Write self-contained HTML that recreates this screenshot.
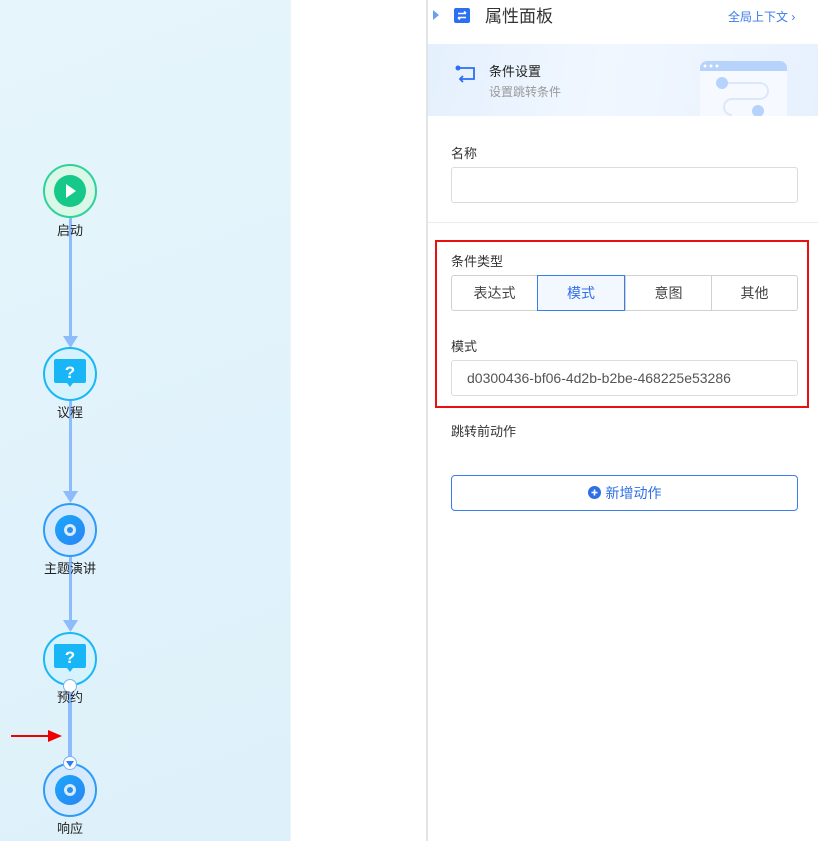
<!DOCTYPE html>
<html><head><meta charset="utf-8"><style>
*{margin:0;padding:0;box-sizing:border-box}
body{width:818px;height:841px;overflow:hidden;position:relative;background:#fff;font-family:"Liberation Sans","Noto Sans CJK SC",sans-serif;font-size:13px;color:#333}
.a{position:absolute}
.lbl{position:absolute;width:120px;left:10px;text-align:center;font-size:13px;color:#222}
.node{position:absolute;left:43px;width:54px;height:54px;border-radius:50%}
.seg{position:absolute;top:275px;height:36px;border:1px solid #d0d0d0;text-align:center;line-height:34px;font-size:14px;color:#444;background:#fff}
.inp{position:absolute;left:451px;width:347px;border:1px solid #dcdcdc;border-radius:3px}
</style></head><body>
<div class="a" style="left:0;top:0;width:290px;height:841px;background:linear-gradient(160deg,#e6f5fb,#e0f2fb 60%,#def1fa)"></div>
<div class="a" style="left:290px;top:0;width:1px;height:841px;background:#eef4f8"></div>
<div class="a" style="left:69px;top:218px;width:3px;height:120px;background:#8cbcfb"></div>
<svg class="a" style="left:63px;top:336px" width="15" height="12"><path d="M0 0H15L7.5 12Z" fill="#8cbcfb"/></svg>
<div class="a" style="left:69px;top:401px;width:3px;height:92px;background:#8cbcfb"></div>
<svg class="a" style="left:63px;top:491px" width="15" height="12"><path d="M0 0H15L7.5 12Z" fill="#8cbcfb"/></svg>
<div class="a" style="left:69px;top:557px;width:3px;height:65px;background:#8cbcfb"></div>
<svg class="a" style="left:63px;top:620px" width="15" height="12"><path d="M0 0H15L7.5 12Z" fill="#8cbcfb"/></svg>
<div class="a" style="left:68px;top:688px;width:4px;height:76px;background:#8cbcfb"></div>
<div class="a" style="left:11px;top:735px;width:40px;height:2px;background:#e00"></div>
<svg class="a" style="left:48px;top:730px" width="14" height="12"><path d="M0 0L14 6L0 12Z" fill="#e00"/></svg>
<div class="node" style="top:164px;background:#dbf7e8;border:2px solid #2fd29a"></div>
<div class="a" style="left:54px;top:175px;width:32px;height:32px;border-radius:50%;background:#16c98a"></div>
<svg class="a" style="left:66px;top:184px" width="10" height="14"><path d="M0 0L10 7L0 14Z" fill="#fff"/></svg>
<div class="lbl" style="top:220px">启动</div>
<div class="node" style="top:347px;background:#d6f3fd;border:2px solid #1ab7f7"></div>
<svg class="a" style="left:53px;top:359px" width="34" height="30"><path d="M1 2a2 2 0 0 1 2-2h28a2 2 0 0 1 2 2v20a2 2 0 0 1-2 2H20l-3 4-3-4H3a2 2 0 0 1-2-2Z" fill="#18b6f6"/><text x="17" y="19" text-anchor="middle" font-size="17" font-weight="bold" fill="#fff" font-family="Liberation Sans">?</text></svg>
<div class="lbl" style="top:402px">议程</div>
<div class="node" style="top:503px;background:#d5ebfd;border:2px solid #2d9bf9"></div>
<div class="a" style="left:55px;top:515px;width:30px;height:30px;border-radius:50%;background:linear-gradient(135deg,#1aa8fb,#2a84f3)"></div>
<div class="a" style="left:64px;top:524px;width:12px;height:12px;border-radius:50%;background:#d7ecfd"></div>
<div class="a" style="left:67px;top:527px;width:6px;height:6px;border-radius:50%;background:#2a90f5"></div>
<div class="lbl" style="top:558px">主题演讲</div>
<div class="node" style="top:632px;background:#d6f3fd;border:2px solid #1ab7f7"></div>
<svg class="a" style="left:53px;top:644px" width="34" height="30"><path d="M1 2a2 2 0 0 1 2-2h28a2 2 0 0 1 2 2v20a2 2 0 0 1-2 2H20l-3 4-3-4H3a2 2 0 0 1-2-2Z" fill="#18b6f6"/><text x="17" y="19" text-anchor="middle" font-size="17" font-weight="bold" fill="#fff" font-family="Liberation Sans">?</text></svg>
<div class="a" style="left:63px;top:679px;width:14px;height:14px;border-radius:50%;background:#fff;border:1px solid #7fb0f5"></div>
<div class="lbl" style="top:687px">预约</div>
<div class="node" style="top:763px;background:#d5ebfd;border:2px solid #2d9bf9"></div>
<div class="a" style="left:55px;top:775px;width:30px;height:30px;border-radius:50%;background:linear-gradient(135deg,#1aa8fb,#2a84f3)"></div>
<div class="a" style="left:64px;top:784px;width:12px;height:12px;border-radius:50%;background:#d7ecfd"></div>
<div class="a" style="left:67px;top:787px;width:6px;height:6px;border-radius:50%;background:#2a90f5"></div>
<div class="a" style="left:63px;top:756px;width:14px;height:14px;border-radius:50%;background:#fff;border:1px solid #7fb0f5"></div>
<svg class="a" style="left:66px;top:761px" width="8" height="6"><path d="M0 0H8L4 6Z" fill="#2d7ff5"/></svg>
<div class="lbl" style="top:818px;color:#222">响应</div>
<div class="a" style="left:426px;top:0;width:2px;height:841px;background:#e4e4e4"></div>
<svg class="a" style="left:433px;top:10px" width="6" height="10"><path d="M0 0L6 5L0 10Z" fill="#6a9ff0"/></svg>
<svg class="a" style="left:454px;top:8px" width="16" height="15"><rect width="16" height="15" rx="2" fill="#2b6ff2"/><path d="M4 5.5H12M10 3.5L12 5.5M12 9.5H4M6 11.5L4 9.5" stroke="#fff" stroke-width="1.6" fill="none"/></svg>
<div class="a" style="left:485px;top:2px;font-size:17px;color:#333">属性面板</div>
<div class="a" style="left:728px;top:8px;font-size:12px;color:#3a7ae6">全局上下文 ›</div>
<div class="a" style="left:428px;top:44px;width:390px;height:72px;background:linear-gradient(100deg,#e4f0fd,#f1f7ff 45%,#e7f1fe)"></div>
<svg class="a" style="left:455px;top:65px" width="22" height="22"><circle cx="3" cy="3" r="2.5" fill="#2b6ff2"/><path d="M3 3H19V14H5M8 11L5 14L8 17" stroke="#2b6ff2" stroke-width="1.8" fill="none"/></svg>
<div class="a" style="left:489px;top:61px;font-size:13px;color:#222">条件设置</div>
<div class="a" style="left:489px;top:83px;font-size:12px;color:#999">设置跳转条件</div>
<div class="a" style="left:700px;top:61px;width:87px;height:55px;background:#f6f9ff;border-radius:7px 7px 0 0;overflow:hidden">
<div style="height:10px;background:#b6d3fb"></div>
<svg class="a" style="left:0;top:0" width="87" height="55"><circle cx="5" cy="5" r="1.5" fill="#fff"/><circle cx="11" cy="5" r="1.5" fill="#fff"/><circle cx="17" cy="5" r="1.5" fill="#fff"/><path d="M22 22H60a8 8 0 0 1 0 16H32a8 8 0 0 0 0 16" stroke="#dbe8fb" stroke-width="2" fill="none"/><circle cx="22" cy="22" r="6" fill="#b6d3fb"/><circle cx="58" cy="50" r="6" fill="#b6d3fb"/></svg></div>
<div class="a" style="left:451px;top:143px;font-size:13px;color:#333">名称</div>
<div class="inp" style="top:167px;height:36px"></div>
<div class="a" style="left:428px;top:222px;width:390px;height:1px;background:#ececec"></div>
<div class="a" style="left:435px;top:240px;width:374px;height:168px;border:2px solid #e81010"></div>
<div class="a" style="left:451px;top:251px;font-size:13px;color:#333">条件类型</div>
<div class="seg" style="left:451px;width:87px;border-radius:3px 0 0 3px">表达式</div>
<div class="seg" style="left:625px;width:87px">意图</div>
<div class="seg" style="left:711px;width:87px;border-radius:0 3px 3px 0">其他</div>
<div class="seg" style="left:537px;width:88px;border-color:#3a7eee;color:#2f6fe6;background:#f3f8ff">模式</div>
<div class="a" style="left:451px;top:336px;font-size:13px;color:#333">模式</div>
<div class="inp" style="top:360px;height:36px;padding-left:15px;line-height:34px;font-size:14px;color:#555">d0300436-bf06-4d2b-b2be-468225e53286</div>
<div class="a" style="left:451px;top:421px;font-size:13px;color:#333">跳转前动作</div>
<div class="a" style="left:451px;top:475px;width:347px;height:36px;border:1px solid #3a7eee;border-radius:4px;text-align:center;line-height:34px;font-size:14px;color:#2f6fe6"><svg width="13" height="13" style="vertical-align:-1px;margin-right:5px"><circle cx="6.5" cy="6.5" r="6.5" fill="#2f6fe6"/><path d="M3.5 6.5H9.5M6.5 3.5V9.5" stroke="#fff" stroke-width="1.6"/></svg>新增动作</div>
</body></html>
